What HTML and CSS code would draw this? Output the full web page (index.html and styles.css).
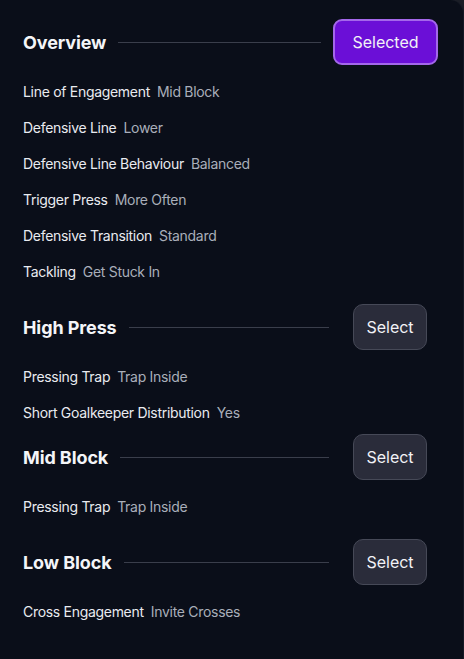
FILE: index.html
```html
<!DOCTYPE html>
<html>
  <head>
    <title>Tactics</title>
    <link rel="stylesheet" href="styles.css">
  </head>
  <body>
    <div class="card">
      <section class="block">
        <div class="block-head">
          <h2>Overview</h2>
          <span class="rule"></span>
          <button class="btn btn-selected">Selected</button>
        </div>
        <ul class="settings">
          <li><span class="label">Line of Engagement</span><span class="value">Mid Block</span></li>
          <li><span class="label">Defensive Line</span><span class="value">Lower</span></li>
          <li><span class="label">Defensive Line Behaviour</span><span class="value">Balanced</span></li>
          <li><span class="label">Trigger Press</span><span class="value">More Often</span></li>
          <li><span class="label">Defensive Transition</span><span class="value">Standard</span></li>
          <li><span class="label">Tackling</span><span class="value">Get Stuck In</span></li>
        </ul>
      </section>
      <section class="block">
        <div class="block-head">
          <h2>High Press</h2>
          <span class="rule"></span>
          <button class="btn btn-select">Select</button>
        </div>
        <ul class="settings">
          <li><span class="label">Pressing Trap</span><span class="value">Trap Inside</span></li>
          <li><span class="label">Short Goalkeeper Distribution</span><span class="value">Yes</span></li>
        </ul>
      </section>
      <section class="block tight">
        <div class="block-head">
          <h2>Mid Block</h2>
          <span class="rule"></span>
          <button class="btn btn-select">Select</button>
        </div>
        <ul class="settings">
          <li><span class="label">Pressing Trap</span><span class="value">Trap Inside</span></li>
        </ul>
      </section>
      <section class="block">
        <div class="block-head">
          <h2>Low Block</h2>
          <span class="rule"></span>
          <button class="btn btn-select">Select</button>
        </div>
        <ul class="settings">
          <li><span class="label">Cross Engagement</span><span class="value">Invite Crosses</span></li>
        </ul>
      </section>
    </div>
  </body>
</html>
```

FILE: styles.css
```css
body {
  margin: 0;
  background: #1a1d26;
  font-family: Inter, "Noto Sans", sans-serif;
  color: #e8eaef;
}
.card {
  width: 464px;
  min-height: 659px;
  box-sizing: border-box;
  background: #0a0e19;
  border-right: 1px solid #141925;
  border-top-right-radius: 14px;
  padding-top: 19px;
}
.block {
  margin-bottom: 15px;
}
.block.tight {
  margin-top: -11px;
}
.block-head {
  display: flex;
  align-items: center;
  height: 46px;
  padding: 0 25px 0 23px;
}
.block-head h2 {
  margin: 0;
  font-size: 18px;
  font-weight: 700;
  letter-spacing: -0.1px;
  color: #f4f5f8;
}
.rule {
  flex: 1;
  height: 1px;
  margin: 0 12px;
  background: #3a3e4b;
}
.btn {
  flex: none;
  height: 46px;
  box-sizing: border-box;
  font-family: inherit;
  font-size: 16px;
  color: #f2f2f6;
  border-radius: 9px;
  cursor: pointer;
}
.btn-selected {
  width: 105px;
  background: #6b0fd7;
  border: 2px solid #a467ea;
}
.btn-select {
  width: 74px;
  margin: 0 11px 0 12px;
  background: #2a2c3a;
  border: 1px solid #464957;
  border-radius: 10px;
}
.settings {
  list-style: none;
  margin: 8px 0 0;
  padding: 0 0 0 23px;
}
.settings li {
  display: flex;
  gap: 7px;
  height: 36px;
  align-items: center;
  font-size: 14px;
  letter-spacing: -0.3px;
}
.label {
  color: #e9ebf0;
}
.value {
  color: #a9aeba;
}
```
